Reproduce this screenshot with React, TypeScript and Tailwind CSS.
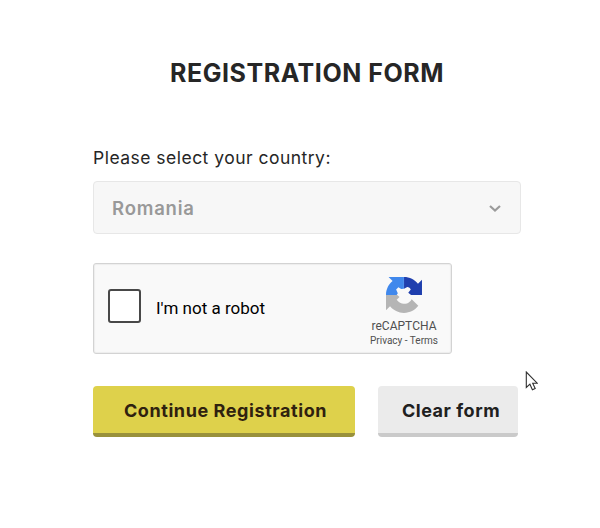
import React from "react";

function RecaptchaLogo() {
  return (
    <svg className="h-9 w-9" viewBox="0 0 64 64" aria-hidden="true">
      <path d="M64 31.955l-.033-1.37V4.687l-7.16 7.16C50.948 4.674 42.033.093 32.05.093v21l5-3c2-.5 5 1 7 4l-4.5 6 5 3.9z" fill="#1f3fae" />
      <path d="M31.862.094l-1.37.033H4.594l7.16 7.16C4.58 13.147 0 22.06 0 32.046h19l2-3-3-7 4-4 5 3.5 4.9-.5z" fill="#4088ec" />
      <path d="M.001 32.045l.033 1.37v25.898l7.16-7.16c5.86 7.173 14.774 11.754 24.76 11.754 10.4 0 19.622-4.96 25.458-12.64l-11.736-11.86a15.55 15.55 0 0 1-4.754 5.334c-2.05 1.6-4.952 2.906-8.968 2.906-4.976 0-9.288-3.14-12.963-7.287l5-5-4-3.315z" fill="#b5b5b5" />
    </svg>
  );
}

function Captcha() {
  return (
    <div className="mt-[29px] flex h-[91px] w-[359px] items-start rounded-[3px] border border-[#d3d3d3] bg-[#f9f9f9] p-px font-[Roboto,sans-serif] shadow-[inset_0_0_1px_1px_rgba(0,0,0,0.05)]">
      <span className="ml-[13px] mt-6 h-[34px] w-[33px] shrink-0 rounded-[3px] border-2 border-[#484848] bg-white" />
      <span className="ml-[15px] mt-[31px] whitespace-nowrap text-[17px] leading-6 text-black">I'm not a robot</span>
      <div className="ml-auto mr-[5px] mt-3 flex w-[82px] flex-col items-center whitespace-nowrap text-[#505050]">
        <RecaptchaLogo />
        <span className="mt-[5px] text-[12px] leading-4 tracking-[0.03px]">reCAPTCHA</span>
        <span className="text-[10px] leading-[14px]">Privacy - Terms</span>
      </div>
    </div>
  );
}

export default function App() {
  return (
    <main className="relative h-[528px] w-[600px] overflow-hidden bg-white pl-[93px] font-[Inter,sans-serif] text-[#262626]">
      <h1 className="ml-[77px] pt-[57px] whitespace-nowrap text-[25px] font-bold leading-8 tracking-[0.54px]">REGISTRATION FORM</h1>
      <p className="mt-[57px] whitespace-nowrap text-[17.5px] leading-6 tracking-[0.48px]">Please select your country:</p>
      <div className="mt-[11px] flex h-[53px] w-[428px] items-center justify-between rounded-[4px] border border-[#e7e7e7] bg-[#f7f7f7] pl-[18px] pr-[19px]">
        <span className="text-[18.5px] font-semibold leading-6 tracking-[0.8px] text-[#999999]">Romania</span>
        <svg className="h-3 w-3" viewBox="0 0 12 12" fill="none" stroke="#9b9b9b" strokeWidth="2.2">
          <path d="M1 4l5 4.5L11 4" />
        </svg>
      </div>
      <Captcha />
      <div className="mt-8 flex gap-6">
        <button className="h-[51px] w-[262px] whitespace-nowrap rounded-[4px] border-b-4 border-[#99913b] bg-[#ded14b] pl-[3px] pt-0.5 text-[18px] font-bold tracking-[0.58px] text-[#2f210f]">Continue Registration</button>
        <button className="-ml-px h-[51px] w-[140px] whitespace-nowrap rounded-[4px] border-b-4 border-[#cacaca] bg-[#ebebeb] pl-[6px] pt-0.5 text-[18px] font-bold tracking-[0.54px] text-[#202020]">Clear form</button>
      </div>
      <svg className="absolute left-[525px] top-[371px] h-5 w-[13px]" viewBox="0 0 13 20" fill="white" stroke="#303030" strokeWidth="1.1">
        <path d="M1.3 1v15.5l3.6-3.3 2.5 5.5 2.8-1.3-2.5-5.2h4.5z" />
      </svg>
    </main>
  );
}
